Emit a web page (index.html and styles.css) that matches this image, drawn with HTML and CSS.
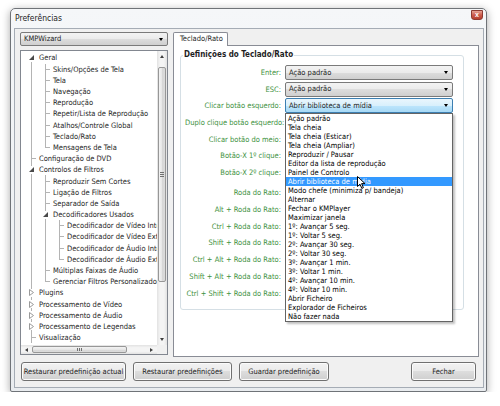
FILE: index.html
```html
<!DOCTYPE html>
<html lang="pt">
<head>
    <meta charset="UTF-8">
    <title>Preferências</title>
    <link rel="stylesheet" href="styles.css">
</head>
<body>
    <div class="janela">
        <div class="janela-titulo">
            <span class="titulo">Preferências</span>
            <span class="btn-fechar">x</span>
        </div>

        <div class="janela-corpo">
            <div class="conteudo">
                <!-- coluna da esquerda: perfil e arvore -->
                <div class="coluna-esq">
                    <div class="combo"><span>KMPWizard</span><span class="seta"></span></div>

                    <div class="arvore">
                        <div class="arvore-itens">
                            <div class="no"><span class="g f"><i class="exp"><svg width="5" height="5" viewBox="0 0 5 5"><path d="M5 0V5H0Z" fill="#4a4a4a"/></svg></i></span><span class="txt">Geral</span></div>
                            <div class="no"><span class="g v"></span><span class="g t"></span><span class="txt">Skins/Opções de Tela</span></div>
                            <div class="no"><span class="g v"></span><span class="g t"></span><span class="txt">Tela</span></div>
                            <div class="no"><span class="g v"></span><span class="g t"></span><span class="txt">Navegação</span></div>
                            <div class="no"><span class="g v"></span><span class="g t"></span><span class="txt">Reprodução</span></div>
                            <div class="no"><span class="g v"></span><span class="g t"></span><span class="txt">Repetir/Lista de Reprodução</span></div>
                            <div class="no"><span class="g v"></span><span class="g t"></span><span class="txt">Atalhos/Controle Global</span></div>
                            <div class="no"><span class="g v"></span><span class="g t"></span><span class="txt">Teclado/Rato</span></div>
                            <div class="no"><span class="g v"></span><span class="g l"></span><span class="txt">Mensagens de Tela</span></div>
                            <div class="no"><span class="g t"></span><span class="txt">Configuração de DVD</span></div>
                            <div class="no"><span class="g v"><i class="exp"><svg width="5" height="5" viewBox="0 0 5 5"><path d="M5 0V5H0Z" fill="#4a4a4a"/></svg></i></span><span class="txt">Controlos de Filtros</span></div>
                            <div class="no"><span class="g v"></span><span class="g t"></span><span class="txt">Reproduzir Sem Cortes</span></div>
                            <div class="no"><span class="g v"></span><span class="g t"></span><span class="txt">Ligação de Filtros</span></div>
                            <div class="no"><span class="g v"></span><span class="g t"></span><span class="txt">Separador de Saída</span></div>
                            <div class="no"><span class="g v"></span><span class="g v"><i class="exp"><svg width="5" height="5" viewBox="0 0 5 5"><path d="M5 0V5H0Z" fill="#4a4a4a"/></svg></i></span><span class="txt">Decodificadores Usados</span></div>
                            <div class="no"><span class="g v"></span><span class="g v"></span><span class="g t"></span><span class="txt">Decodificador de Vídeo Interno</span></div>
                            <div class="no"><span class="g v"></span><span class="g v"></span><span class="g t"></span><span class="txt">Decodificador de Vídeo Externo</span></div>
                            <div class="no"><span class="g v"></span><span class="g v"></span><span class="g t"></span><span class="txt">Decodificador de Áudio Interno</span></div>
                            <div class="no"><span class="g v"></span><span class="g v"></span><span class="g l"></span><span class="txt">Decodificador de Áudio Externo</span></div>
                            <div class="no"><span class="g v"></span><span class="g t"></span><span class="txt">Múltiplas Faixas de Áudio</span></div>
                            <div class="no"><span class="g v"></span><span class="g l"></span><span class="txt">Gerenciar Filtros Personalizados</span></div>
                            <div class="no"><span class="g v"><i class="exp"><svg width="5" height="7" viewBox="0 0 5 7"><path d="M.5 .5L4.5 3.5L.5 6.5Z" fill="#fff" stroke="#9a9a9a"/></svg></i></span><span class="txt">Plugins</span></div>
                            <div class="no"><span class="g v"><i class="exp"><svg width="5" height="7" viewBox="0 0 5 7"><path d="M.5 .5L4.5 3.5L.5 6.5Z" fill="#fff" stroke="#9a9a9a"/></svg></i></span><span class="txt">Processamento de Vídeo</span></div>
                            <div class="no"><span class="g v"><i class="exp"><svg width="5" height="7" viewBox="0 0 5 7"><path d="M.5 .5L4.5 3.5L.5 6.5Z" fill="#fff" stroke="#9a9a9a"/></svg></i></span><span class="txt">Processamento de Áudio</span></div>
                            <div class="no"><span class="g v"><i class="exp"><svg width="5" height="7" viewBox="0 0 5 7"><path d="M.5 .5L4.5 3.5L.5 6.5Z" fill="#fff" stroke="#9a9a9a"/></svg></i></span><span class="txt">Processamento de Legendas</span></div>
                            <div class="no"><span class="g t"></span><span class="txt">Visualização</span></div>
                        </div>

                        <div class="scroll-v">
                            <div class="sb-btn cima"></div>
                            <div class="trilho">
                                <div class="polegar"><i class="grip"></i></div>
                            </div>
                            <div class="sb-btn baixo"></div>
                        </div>
                        <div class="scroll-h">
                            <div class="sb-btn esq"></div>
                            <div class="trilho">
                                <div class="polegar"><i class="grip"></i></div>
                            </div>
                            <div class="sb-btn dir"></div>
                        </div>
                        <div class="canto"></div>
                    </div>
                </div>

                <!-- coluna da direita: aba Teclado/Rato -->
                <div class="coluna-dir">
                    <div class="abas">
                        <div class="aba">Teclado/Rato</div>
                    </div>
                    <div class="painel">
                        <fieldset class="grupo">
                            <legend>Definições do Teclado/Rato</legend>
                            <div class="linhas">
                                <div class="linha"><label>Enter:</label><div class="combo"><span>Ação padrão</span><span class="seta"></span></div></div>
                                <div class="linha"><label>ESC:</label><div class="combo"><span>Ação padrão</span><span class="seta"></span></div></div>
                                <div class="linha">
                                    <label>Clicar botão esquerdo:</label>
                                    <div class="combo ativo">
                                        <span>Abrir biblioteca de mídia</span><span class="seta"></span>
                                        <div class="lista">
                                            <div>Ação padrão</div>
                                            <div>Tela cheia</div>
                                            <div>Tela cheia (Esticar)</div>
                                            <div>Tela cheia (Ampliar)</div>
                                            <div>Reproduzir / Pausar</div>
                                            <div>Editor da lista de reprodução</div>
                                            <div>Painel de Controlo</div>
                                            <div class="sel">Abrir biblioteca de mídia
                                                <svg class="cursor" width="9" height="13" viewBox="0 0 9 13"><path d="M.5 .5V10.5L3 8.2L4.8 12.4L6.4 11.7L4.6 7.6H8Z" fill="#fff" stroke="#000" stroke-linejoin="round"/></svg>
                                            </div>
                                            <div>Modo chefe (minimiza p/ bandeja)</div>
                                            <div>Alternar</div>
                                            <div>Fechar o KMPlayer</div>
                                            <div>Maximizar janela</div>
                                            <div>1º: Avançar 5 seg.</div>
                                            <div>1º: Voltar 5 seg.</div>
                                            <div>2º: Avançar 30 seg.</div>
                                            <div>2º: Voltar 30 seg.</div>
                                            <div>3º: Avançar 1 min.</div>
                                            <div>3º: Voltar 1 min.</div>
                                            <div>4º: Avançar 10 min.</div>
                                            <div>4º: Voltar 10 min.</div>
                                            <div>Abrir Ficheiro</div>
                                            <div>Explorador de Ficheiros</div>
                                            <div>Não fazer nada</div>
                                        </div>
                                    </div>
                                </div>
                                <div class="linha"><label>Duplo clique botão esquerdo:</label><div class="combo"><span>Ação padrão</span><span class="seta"></span></div></div>
                                <div class="linha"><label>Clicar botão do meio:</label><div class="combo"><span>Ação padrão</span><span class="seta"></span></div></div>
                                <div class="linha"><label>Botão-X 1º clique:</label><div class="combo"><span>Ação padrão</span><span class="seta"></span></div></div>
                                <div class="linha"><label>Botão-X 2º clique:</label><div class="combo"><span>Ação padrão</span><span class="seta"></span></div></div>
                                <div class="linha sep"><label>Roda do Rato:</label><div class="combo"><span>Ação padrão</span><span class="seta"></span></div></div>
                                <div class="linha"><label>Alt + Roda do Rato:</label><div class="combo"><span>Ação padrão</span><span class="seta"></span></div></div>
                                <div class="linha"><label>Ctrl + Roda do Rato:</label><div class="combo"><span>Ação padrão</span><span class="seta"></span></div></div>
                                <div class="linha"><label>Shift + Roda do Rato:</label><div class="combo"><span>Ação padrão</span><span class="seta"></span></div></div>
                                <div class="linha"><label>Ctrl + Alt + Roda do Rato:</label><div class="combo"><span>Ação padrão</span><span class="seta"></span></div></div>
                                <div class="linha"><label>Shift + Alt + Roda do Rato:</label><div class="combo"><span>Ação padrão</span><span class="seta"></span></div></div>
                                <div class="linha"><label>Ctrl + Shift + Roda do Rato:</label><div class="combo"><span>Ação padrão</span><span class="seta"></span></div></div>
                            </div>
                        </fieldset>
                    </div>
                </div>
            </div>

            <div class="botoes">
                <button class="btn b-actual">Restaurar predefinição actual</button>
                <button class="btn b-restaurar">Restaurar predefinições</button>
                <button class="btn b-guardar">Guardar predefinição</button>
                <button class="btn b-fechar">Fechar</button>
            </div>
        </div>
    </div>
</body>
</html>
```

FILE: styles.css
```css
* {
    margin: 0;
    padding: 0;
    box-sizing: border-box;
}

body {
    background: #fff;
    font-family: "DejaVu Sans Condensed", "Liberation Sans", Arial, sans-serif;
    font-size: 7.5px;
    color: #1e1e1e;
}

/* janela */
.janela {
    width: 477px;
    height: 384px;
    margin: 8px 0 0 10px;
    padding: 0 2px 3px 3px;
    border: 1px solid #6f7378;
    border-radius: 5px 5px 2px 2px;
    background: linear-gradient(to bottom, #f5f7f9, #e9ecef);
    box-shadow: 0 2px 9px rgba(0, 0, 0, 0.35);
    display: flex;
    flex-direction: column;
}

.janela-titulo {
    height: 19px;
    flex: none;
    display: flex;
    justify-content: space-between;
    align-items: flex-start;
    padding-left: 1px;
}

.titulo {
    font-size: 8.5px;
    line-height: 10px;
    padding-top: 4px;
}

.btn-fechar {
    width: 12px;
    height: 10px;
    margin: 1px 1px 0 0;
    border: 1px solid #8d3a32;
    border-radius: 0 0 3px 3px;
    background: linear-gradient(#e6a396, #cc5b4c 50%, #b8402f);
    color: #fff;
    font-family: "Liberation Sans", Arial, sans-serif;
    font-size: 7px;
    font-weight: bold;
    line-height: 7px;
    text-align: center;
}

.janela-corpo {
    flex: 1;
    border: 1px solid #a5acb5;
    background: #f0f0f0;
    padding: 3px 0 6px 0;
    display: flex;
    flex-direction: column;
}

.conteudo {
    height: 325px;
    flex: none;
    display: flex;
    gap: 5px;
    padding: 0 4px 0 5px;
}

.coluna-esq {
    width: 148px;
    flex: none;
    display: flex;
    flex-direction: column;
    gap: 4px;
    padding-bottom: 2px;
}

.coluna-dir {
    flex: 1;
    display: flex;
    flex-direction: column;
}

/* combos */
.combo {
    height: 14px;
    flex: none;
    position: relative;
    display: flex;
    align-items: center;
    padding-left: 3px;
    border: 1px solid #7a7a7a;
    border-radius: 2px;
    background: linear-gradient(#f3f3f3, #ebebeb 50%, #dddddd 50%, #cfcfcf);
    line-height: 10px;
    white-space: nowrap;
}

.combo .seta {
    margin-left: auto;
    margin-right: 4px;
    width: 0;
    height: 0;
    border-left: 2.5px solid transparent;
    border-right: 2.5px solid transparent;
    border-top: 3px solid #000;
}

.combo.ativo {
    border-color: #3c7fb1;
    background: linear-gradient(#eaf6fd, #d9f0fc 50%, #bee6fd 50%, #a7d9f5);
}

/* arvore */
.arvore {
    flex: 1;
    border: 1px solid #828790;
    background: #fff;
    display: grid;
    grid-template-columns: minmax(0, 1fr) 10px;
    grid-template-rows: minmax(0, 1fr) 9px;
    overflow: hidden;
    --linha: #b4b4b4;
}

.arvore-itens {
    overflow: hidden;
    padding: 1.4px 0 0 3px;
}

.no {
    height: 11.2px;
    display: flex;
    align-items: center;
    white-space: nowrap;
}

.g {
    width: 14px;
    height: 100%;
    flex: none;
    display: flex;
    align-items: center;
}

.g.v {
    background: linear-gradient(var(--linha), var(--linha)) 7px 0 / 1px 100% no-repeat;
}

.g.t {
    background:
        linear-gradient(var(--linha), var(--linha)) 7px 0 / 1px 100% no-repeat,
        linear-gradient(var(--linha), var(--linha)) 7px 50% / 5px 1px no-repeat;
}

.g.l {
    background:
        linear-gradient(var(--linha), var(--linha)) 7px 0 / 1px 50% no-repeat,
        linear-gradient(var(--linha), var(--linha)) 7px 50% / 5px 1px no-repeat;
}

.g.f {
    background: linear-gradient(var(--linha), var(--linha)) 7px 100% / 1px 50% no-repeat;
}

.exp {
    width: 7px;
    height: 8px;
    margin-left: 4px;
    background: #fff;
    display: flex;
    align-items: center;
    justify-content: center;
}

.exp svg {
    display: block;
}

.txt {
    padding-left: 1px;
    line-height: 11px;
}

/* barras de rolagem */
.scroll-v,
.scroll-h {
    background: #f0f0f0;
    display: flex;
}

.scroll-v {
    flex-direction: column;
    background: linear-gradient(to right, #e2e2e2, #f4f4f4 30%, #f4f4f4 70%, #e2e2e2);
}

.scroll-h {
    background: linear-gradient(#e2e2e2, #f4f4f4 30%, #f4f4f4 70%, #e2e2e2);
}

.sb-btn {
    flex: none;
    display: flex;
    align-items: center;
    justify-content: center;
}

.scroll-v .sb-btn {
    height: 11px;
}

.scroll-h .sb-btn {
    width: 11px;
}

.sb-btn::before {
    content: "";
    width: 0;
    height: 0;
}

.sb-btn.cima::before {
    border-left: 2.5px solid transparent;
    border-right: 2.5px solid transparent;
    border-bottom: 3px solid #404040;
}

.sb-btn.baixo::before {
    border-left: 2.5px solid transparent;
    border-right: 2.5px solid transparent;
    border-top: 3px solid #404040;
}

.sb-btn.esq::before {
    border-top: 2.5px solid transparent;
    border-bottom: 2.5px solid transparent;
    border-right: 3px solid #404040;
}

.sb-btn.dir::before {
    border-top: 2.5px solid transparent;
    border-bottom: 2.5px solid transparent;
    border-left: 3px solid #404040;
}

.trilho {
    flex: 1;
    display: flex;
}

.scroll-v .trilho {
    flex-direction: column;
    align-items: center;
}

.scroll-h .trilho {
    align-items: center;
}

.polegar {
    border: 1px solid #979797;
    border-radius: 2px;
    display: flex;
    align-items: center;
    justify-content: center;
}

.scroll-v .polegar {
    width: 8px;
    height: 215px;
    margin-top: 5px;
    background: linear-gradient(to right, #f3f3f3, #e6e6e6 50%, #d6d6d6 50%, #dcdcdc);
}

.scroll-h .polegar {
    height: 7px;
    width: 95px;
    background: linear-gradient(#f3f3f3, #e6e6e6 50%, #d6d6d6 50%, #dcdcdc);
}

.scroll-v .grip {
    width: 4px;
    height: 5px;
    background: linear-gradient(#707070 1px, transparent 1px) 0 0 / 100% 2px;
}

.scroll-h .grip {
    width: 5px;
    height: 3px;
    background: linear-gradient(to right, #707070 1px, transparent 1px) 0 0 / 2px 100%;
}

.canto {
    background: #f0f0f0;
}

/* aba e grupo */
.abas {
    height: 14px;
    flex: none;
    display: flex;
    position: relative;
    z-index: 1;
    margin-bottom: -1px;
}

.aba {
    width: 55px;
    padding-left: 6px;
    border: 1px solid #898c95;
    border-bottom: none;
    border-radius: 2px 2px 0 0;
    background: #fff;
    line-height: 12px;
}

.painel {
    flex: 1;
    border: 1px solid #898c95;
    background: #fff;
    padding: 4px 14px 0 6px;
}

.grupo {
    border: 1px solid #d5dfe5;
    border-radius: 3px;
    padding: 5px 9px 8px 4px;
    min-width: 0;
}

.grupo legend {
    font-size: 8px;
    font-weight: bold;
    line-height: 10px;
    padding: 0 1px;
    margin-left: -2px;
}

.linhas {
    display: flex;
    flex-direction: column;
    gap: 1.7px;
}

.linha {
    height: 15px;
    display: flex;
    align-items: center;
    gap: 4px;
}

.linha.sep {
    margin-top: 3.6px;
}

.linha label {
    width: 96px;
    flex: none;
    text-align: right;
    color: #3d9140;
    white-space: nowrap;
}

.linha .combo {
    width: 168px;
    height: 15px;
}

/* lista aberta do combo */
.lista {
    position: absolute;
    top: calc(100% + 1px);
    left: -1px;
    width: 168px;
    z-index: 5;
    background: #fff;
    border: 1px solid #646464;
    box-shadow: 2px 2px 2px rgba(0, 0, 0, 0.25);
}

.lista div {
    height: 9px;
    line-height: 9px;
    padding-left: 2px;
    color: #000;
    white-space: nowrap;
}

.lista .sel {
    position: relative;
    background: #3399ff;
    color: #fff;
}

.cursor {
    position: absolute;
    left: 71px;
    top: -1px;
}

/* botoes */
.botoes {
    height: 19px;
    flex: none;
    display: flex;
    gap: 7px;
    margin-top: 5px;
    padding: 0 7px 0 6px;
}

.btn {
    height: 19px;
    border: 1px solid #707070;
    border-radius: 3px;
    background: linear-gradient(#f2f2f2, #ebebeb 45%, #dddddd 50%, #cfcfcf);
    box-shadow: inset 0 0 0 1px #fbfbfb;
    font: inherit;
    color: #1e1e1e;
}

.b-actual { width: 105px; }
.b-restaurar { width: 99px; }
.b-guardar { width: 90px; }

.b-fechar {
    width: 65px;
    margin-left: auto;
}
```
